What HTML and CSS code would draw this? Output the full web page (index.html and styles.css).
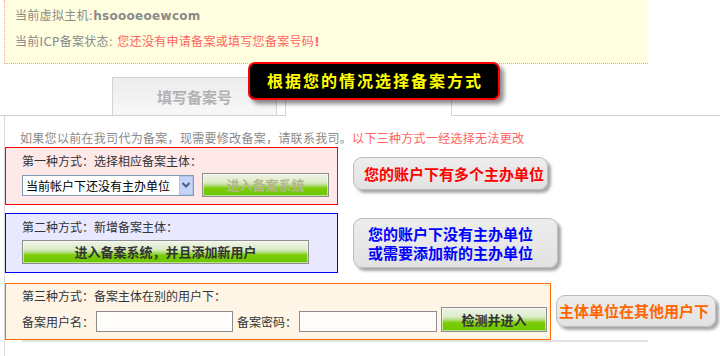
FILE: index.html
```html
<!DOCTYPE html>
<html lang="zh-CN">
<head>
<meta charset="utf-8">
<title>ICP备案</title>
<link rel="stylesheet" href="styles.css">
</head>
<body>
<div class="page">
  <div class="host-info">
    <div class="host-line">当前虚拟主机:<b class="host-name">hsoooeoewcom</b></div>
    <div class="host-line">当前ICP备案状态: <span class="warn">您还没有申请备案或填写您备案号码<b>!</b></span></div>
  </div>

  <div class="tabs">
    <div class="tab tab-inactive">填写备案号</div>
    <div class="tab tab-active"></div>
  </div>
  <div class="banner">根据您的情况选择备案方式</div>

  <div class="panel">
    <p class="notice">如果您以前在我司代为备案，现需要修改备案，请联系我司。<span class="warn">以下三种方式一经选择无法更改</span></p>

    <div class="row row-1">
      <div class="method method-red">
        <div class="method-title">第一种方式：选择相应备案主体：</div>
        <div class="controls controls-1">
          <div class="select-wrap">
            <select class="select"><option>当前帐户下还没有主办单位</option></select>
            <span class="select-arrow"><svg width="10" height="8" viewBox="0 0 10 8"><polyline points="1.5,2 5,5.5 8.5,2" fill="none" stroke="#4b5c8c" stroke-width="2"/></svg></span>
          </div>
          <button class="btn btn-sys">进入备案系统</button>
        </div>
      </div>
      <div class="callout callout-red">您的账户下有多个主办单位</div>
    </div>

    <div class="row row-2">
      <div class="method method-blue">
        <div class="method-title">第二种方式：新增备案主体：</div>
        <button class="btn btn-wide">进入备案系统，并且添加新用户</button>
      </div>
      <div class="callout callout-blue">您的账户下没有主办单位<br>或需要添加新的主办单位</div>
    </div>

    <div class="row row-3">
      <div class="method method-orange">
        <div class="method-title">第三种方式：备案主体在别的用户下：</div>
        <div class="controls controls-3">
          <span class="field-label">备案用户名：</span>
          <input class="input input-user" type="text">
          <span class="field-label label-pwd">备案密码：</span>
          <input class="input input-pwd" type="password">
          <button class="btn btn-check">检测并进入</button>
        </div>
      </div>
      <div class="callout callout-orange">主体单位在其他用户下</div>
    </div>

    <div class="rule"></div>
  </div>
</div>
</body>
</html>
```

FILE: styles.css
```css
* { box-sizing: border-box; }

body {
  margin: 0;
  background: #fff;
  font-family: "Noto Sans CJK SC", sans-serif;
  font-size: 12px;
  color: #333;
}

.page {
  position: relative;
  width: 720px;
  height: 356px;
  overflow: hidden;
}

/* top info box */
.host-info {
  margin-left: 4px;
  width: 644px;
  height: 64px;
  background: #ffffe0;
  border-left: 1px dotted #f3a3a3;
  border-bottom: 1px dotted #f3a3a3;
  padding: 3px 0 0 10px;
  color: #8a8a8a;
  font-family: "DejaVu Sans", "Noto Sans CJK SC", sans-serif;
  letter-spacing: 0.3px;
}

.host-line {
  height: 26px;
  line-height: 26px;
  white-space: nowrap;
}

.host-name {
  font-weight: bold;
  font-size: 12px;
}

.warn { color: #ff6262; }

/* tabs */
.tabs {
  display: flex;
  align-items: flex-end;
  margin-top: 13px;
  height: 39px;
  border-bottom: 1px solid #cfcfcf;
  padding-left: 112px;
}

.tab {
  height: 38px;
  border: 1px solid #d4d4d4;
  border-bottom: none;
}

.tab-inactive {
  width: 165px;
  background: linear-gradient(#ececec, #f8f8f8);
  color: #b2b2b2;
  font-weight: bold;
  font-size: 15px;
  text-align: center;
  line-height: 37px;
}

.tab-active {
  width: 167px;
  height: 39px;
  margin-left: 8px;
  margin-bottom: -1px;
  background: #fff;
}

.banner {
  position: absolute;
  left: 248px;
  top: 62px;
  width: 252px;
  height: 38px;
  background: #000;
  border: 2px solid #f00;
  border-radius: 7px;
  box-shadow: 4px 4px 4px rgba(0, 0, 0, 0.45);
  color: #ffff00;
  font-weight: bold;
  font-size: 16px;
  letter-spacing: 2px;
  padding-left: 2px;
  text-align: center;
  line-height: 33px;
  white-space: nowrap;
}

/* panel */
.panel {
  margin-left: 4px;
  border-left: 1px solid #dadada;
  padding-top: 13px;
  height: 240px;
}

.notice {
  margin: 0 0 0 15px;
  line-height: 18px;
  height: 18px;
  color: #8a8a8a;
  letter-spacing: 0.3px;
  white-space: nowrap;
}

.row {
  display: flex;
  align-items: flex-start;
}

.row-2 { margin-top: 8px; }
.row-3 { margin-top: 10px; }

.method {
  padding: 5px 0 0 16px;
}

.method-red {
  width: 333px;
  height: 58px;
  background: #ffe8e8;
  border: 1px solid #ff0000;
}

.method-blue {
  width: 333px;
  height: 60px;
  background: #e8e8ff;
  border: 1px solid #0000ff;
}

.method-orange {
  width: 546px;
  height: 57px;
  background: #fff5e6;
  border: 1px solid #ff6a00;
  padding-top: 4px;
}

.method-title {
  line-height: 16px;
  height: 16px;
  white-space: nowrap;
}

.controls {
  display: flex;
}

.controls-1 {
  margin-top: 4px;
  height: 24px;
  align-items: center;
}

.controls-3 {
  margin-top: 3px;
  height: 25px;
  align-items: flex-end;
}

/* select */
.select-wrap {
  position: relative;
  width: 172px;
  height: 21px;
}

.select {
  appearance: none;
  -webkit-appearance: none;
  width: 100%;
  height: 100%;
  margin: 0;
  border: 1px solid #7f9db9;
  border-radius: 0;
  background: #fff;
  font-family: "Noto Sans CJK SC", sans-serif;
  font-size: 12px;
  color: #000;
  padding: 0 0 0 3px;
}

.select-arrow {
  position: absolute;
  right: 1px;
  top: 1px;
  width: 14px;
  height: 19px;
  background: #c6d4f8;
  border: 1px solid #b3c3ef;
  display: flex;
  align-items: center;
  justify-content: center;
}

/* buttons */
.btn {
  padding: 0;
  border: 1px solid #8e8e8e;
  box-shadow: inset 0 0 0 1px rgba(255, 255, 255, 0.55);
  background: linear-gradient(to bottom, #f0f4e8 0%, #dcebc8 38%, #b2dd7c 52%, #7ccd06 64%, #6cc600 100%);
  font-family: "Noto Sans CJK SC", sans-serif;
  font-weight: bold;
  font-size: 13px;
  color: #333;
  line-height: 20px;
}

.btn-sys {
  width: 127px;
  height: 24px;
  margin-left: 8px;
  color: #b6b68e;
}

.btn-wide {
  display: block;
  width: 287px;
  height: 24px;
  margin-top: 5px;
}

.btn-check {
  width: 106px;
  height: 25px;
  margin-left: 4px;
}

/* inputs */
.field-label {
  line-height: 21px;
  white-space: nowrap;
}

.label-pwd { margin-left: 4px; }

.input {
  height: 21px;
  margin: 0 0 0 2px;
  border: 1px solid #8c8c8c;
  background: #fffdf9;
  padding: 0 2px;
}

.input-user { width: 137px; }
.input-pwd { width: 138px; }

/* callouts */
.callout {
  border: 1px solid #bcbcbc;
  border-radius: 9px;
  background: linear-gradient(#ededed, #e2e2e2);
  box-shadow: 3px 3px 3px rgba(0, 0, 0, 0.35);
  font-weight: bold;
  font-size: 15px;
  white-space: nowrap;
}

.callout-red {
  margin: 10px 0 0 15px;
  width: 195px;
  height: 33px;
  padding-left: 10px;
  line-height: 31px;
  color: #ff0000;
}

.callout-blue {
  margin: 5px 0 0 15px;
  width: 205px;
  height: 50px;
  padding: 5px 0 0 14px;
  line-height: 19px;
  color: #0000ff;
}

.callout-orange {
  margin: 12px 0 0 5px;
  width: 160px;
  height: 32px;
  padding-left: 2px;
  line-height: 30px;
  color: #ff6600;
}

.rule {
  margin-left: 17px;
  width: 626px;
  border-top: 2px solid #e2e2e2;
}
```
